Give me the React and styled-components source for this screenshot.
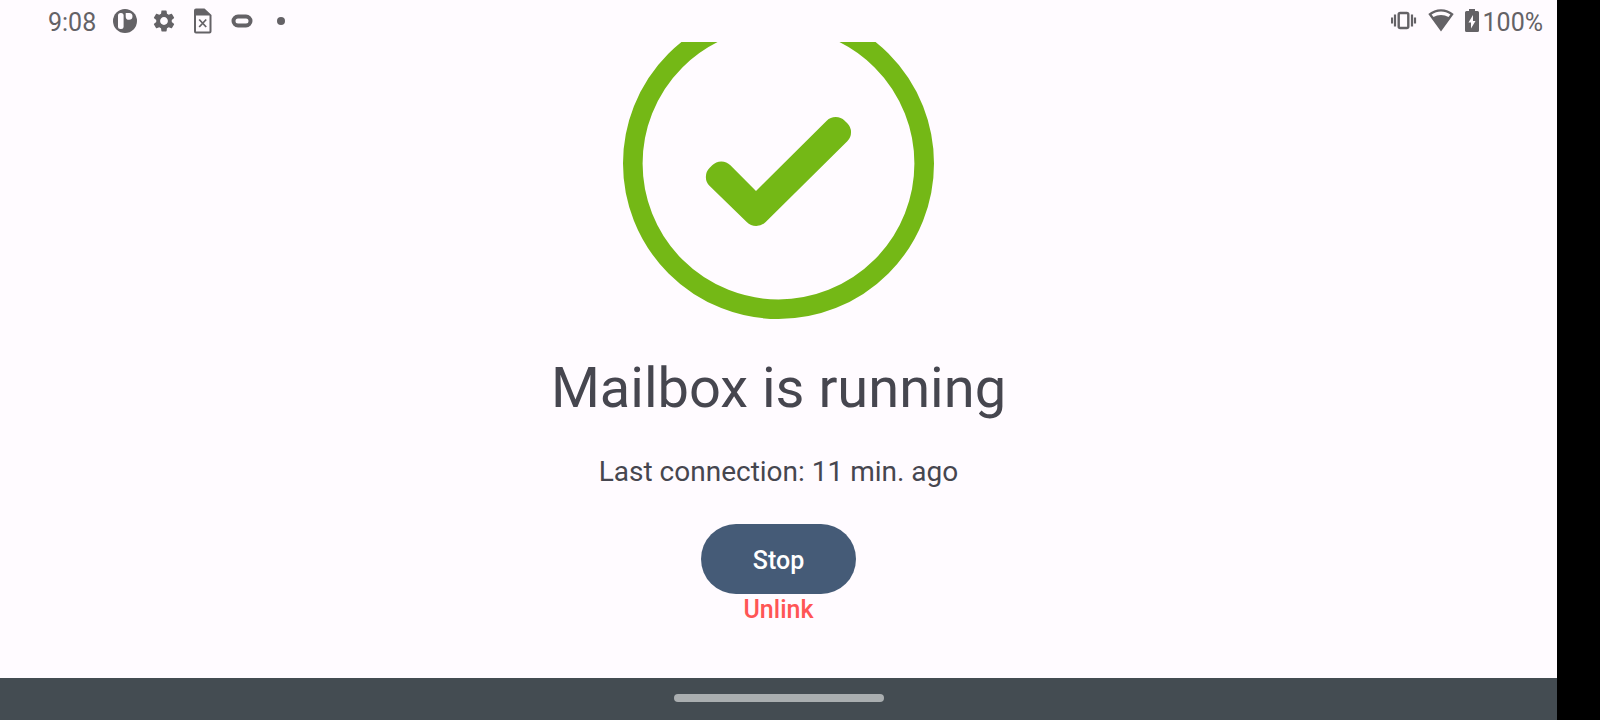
import React from "react";
import styled, { createGlobalStyle } from "styled-components";
import { MdSettings } from "react-icons/md";

const GlobalStyle = createGlobalStyle`
  *, *::before, *::after { box-sizing: border-box; }
  body { margin: 0; background: #000; font-family: Roboto, "Liberation Sans", sans-serif; }
`;

const Device = styled.div`
  height: 100vh;
  padding-right: 43px;
  background: #000;
`;

const Screen = styled.div`
  height: 100%;
  display: flex;
  flex-direction: column;
  background: #fffbff;
  color: #46464f;
`;

const StatusBar = styled.header`
  flex: none;
  height: 42px;
  padding: 0 14px 0 48px;
  display: flex;
  align-items: center;
  justify-content: space-between;
  color: #646266;
  font-size: 25px;
  line-height: 42px;
`;

const StatusGroup = styled.div`
  display: flex;
  align-items: center;
  gap: ${(p) => p.$gap}px;
  padding-top: 4px;
`;

const Icon = styled.svg`
  display: block;
  flex: none;
  margin-bottom: 4px;
`;

const Notifications = styled.div`
  display: flex;
  align-items: center;
  gap: 13px;
`;

const Battery = styled.div`
  display: flex;
  align-items: center;
  gap: 4px;
`;

const Content = styled.main`
  flex: 1;
  min-height: 0;
  overflow: hidden;
  display: flex;
  flex-direction: column;
  align-items: center;
  justify-content: flex-end;
  padding-bottom: 52px;
`;

const Illustration = styled.svg`
  display: block;
  flex: none;
`;

const Title = styled.h1`
  margin: 32px 0 0;
  font-size: 56px;
  line-height: 74px;
  font-weight: 400;
`;

const Subtitle = styled.p`
  margin: 27px 0 0;
  font-size: 28px;
  line-height: 40px;
`;

const StopButton = styled.button`
  flex: none;
  height: 70px;
  margin-top: 32px;
  padding: 4px 52px 0;
  border: 0;
  border-radius: 35px;
  background: #455b77;
  color: #fff;
  font: 500 25px/32px Roboto, "Liberation Sans", sans-serif;
`;

const UnlinkButton = styled.button`
  flex: none;
  padding: 0;
  border: 0;
  background: none;
  color: #ff5555;
  font: 500 25px/32px Roboto, "Liberation Sans", sans-serif;
`;

const NavBar = styled.footer`
  flex: none;
  height: 42px;
  display: flex;
  justify-content: center;
  align-items: center;
  padding-bottom: 2px;
  background: #444c52;
`;

const Handle = styled.div`
  width: 210px;
  height: 8px;
  border-radius: 4px;
  background: #aaaeb0;
`;

const PIcon = () => (
  <Icon width="26" height="26" viewBox="0 0 26 26">
    <circle cx="13" cy="13" r="12" fill="currentColor" />
    <rect x="6" y="5" width="5.600" height="16" rx="2.500" fill="#fffbff" />
    <path d="M13.700 5h3.600a3.400 3.400 0 1 1-3.600 3.400z" fill="#fffbff" />
  </Icon>
);

const FileXIcon = () => (
  <Icon width="26" height="26" viewBox="0 0 26 26">
    <path
      fillRule="evenodd"
      fill="currentColor"
      d="M6 .5h8.500L21.500 7v16.500a2 2 0 0 1-2 2H6a2 2 0 0 1-2-2v-21a2 2 0 0 1 2-2zM6 7.500V23.500h13.500V7.500z"
    />
    <path d="M9.200 11.500l7 7.500M16.200 11.500l-7 7.500" stroke="currentColor" strokeWidth="1.800" />
  </Icon>
);

const PillIcon = () => (
  <Icon width="26" height="26" viewBox="0 0 26 26">
    <rect x="4.500" y="8.500" width="17" height="9" rx="4.500" fill="none" stroke="currentColor" strokeWidth="4" />
  </Icon>
);

const DotIcon = () => (
  <Icon width="26" height="26" viewBox="0 0 26 26">
    <circle cx="13" cy="13" r="4" fill="currentColor" />
  </Icon>
);

const VibrateIcon = () => (
  <Icon width="26" height="26" viewBox="0 0 26 26">
    <rect x="7.700" y="5" width="9.600" height="15" rx="1.500" fill="none" stroke="currentColor" strokeWidth="2.400" />
    <path d="M4 6.500v12M21 6.500v12M1 9.500v6M24 9.500v6" stroke="currentColor" strokeWidth="2.200" />
  </Icon>
);

const WifiIcon = () => (
  <Icon width="26" height="26" viewBox="0 0 26 26">
    <path
      fillRule="evenodd"
      fill="currentColor"
      d="M13 23.500L.3 6C4 2.900 8.300 1.300 13 1.300S22 2.900 25.700 6zM3.600 6.500l1.900 2.600C7.800 7.700 10.300 6.900 13 6.900s5.200.8 7.500 2.200l1.900-2.600C19.500 4.500 16.400 3.500 13 3.500S6.500 4.500 3.600 6.500z"
    />
  </Icon>
);

const BatteryIcon = () => (
  <Icon width="14" height="26" viewBox="0 0 14 26">
    <path
      fillRule="evenodd"
      fill="currentColor"
      d="M4 1h6v2h2.500A1.500 1.500 0 0 1 14 4.500v18a1.500 1.500 0 0 1-1.500 1.500h-11A1.500 1.500 0 0 1 0 22.500V4.500A1.500 1.500 0 0 1 1.500 3H4zM8 7L3.500 14.500H6v6L10.500 13H8z"
    />
  </Icon>
);

const CheckCircle = () => (
  <Illustration width="311" height="311" viewBox="0 0 311 311" role="img" aria-label="Running">
    <circle cx="155.500" cy="155.500" r="145.700" fill="none" stroke="#74b816" strokeWidth="19.600" />
    <path
      fill="#74b816"
      d="M203.700 112.700a12.700 12.700 0 0 1 18 0l2.600 2.600a12.700 12.700 0 0 1 0 18L142.700 214a13.400 13.400 0 0 1-19 0L86.700 178a12.700 12.700 0 0 1 0-18.200l2.500-2.500a12.700 12.700 0 0 1 18.200 0L133 182.900z"
    />
  </Illustration>
);

export default function App() {
  return (
    <>
      <GlobalStyle />
      <Device>
        <Screen>
          <StatusBar>
            <StatusGroup $gap={16}>
              <span>9:08</span>
              <Notifications>
                <PIcon />
                <Icon as={MdSettings} size={26} />
                <FileXIcon />
                <PillIcon />
                <DotIcon />
              </Notifications>
            </StatusGroup>
            <StatusGroup $gap={11}>
              <VibrateIcon />
              <WifiIcon />
              <Battery>
                <BatteryIcon />
                <span>100%</span>
              </Battery>
            </StatusGroup>
          </StatusBar>
          <Content>
            <CheckCircle />
            <Title>Mailbox is running</Title>
            <Subtitle>Last connection: 11 min. ago</Subtitle>
            <StopButton type="button">Stop</StopButton>
            <UnlinkButton type="button">Unlink</UnlinkButton>
          </Content>
          <NavBar>
            <Handle />
          </NavBar>
        </Screen>
      </Device>
    </>
  );
}
